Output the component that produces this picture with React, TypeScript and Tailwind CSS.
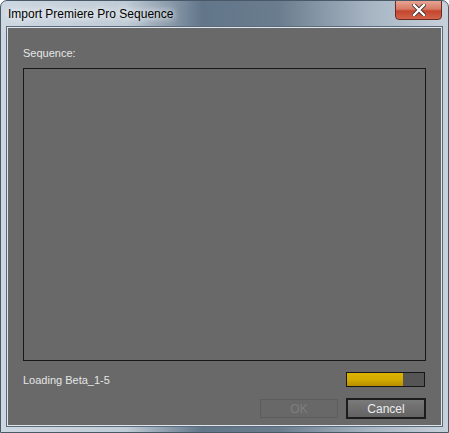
import React from 'react';

export default function App() {
  return (
    <div className="w-[449px] h-[433px] flex flex-col rounded-t-[7px] border border-[#4a5968] bg-[linear-gradient(to_right,#cdd7e1_0%,#bfcbd6_28%,#62768a_45%,#6a7d8e_62%,#a6b4c2_82%,#c7d1db_100%)] font-['Liberation_Sans',sans-serif] overflow-hidden">
      {/* Title bar */}
      <div className="h-[27px] relative flex items-center">
        <span className="pl-[7px] pt-[1px] text-[12px] text-black [text-shadow:0_0_6px_#ffffff,0_0_10px_#ffffff]">
          Import Premiere Pro Sequence
        </span>
        <button className="absolute left-[394px] top-[-1px] w-[47px] h-[20px] rounded-b-[4px] border border-[#6b2a22] bg-[linear-gradient(to_bottom,#e8a493_0%,#d77b65_45%,#c4452e_55%,#d3634b_100%)] flex items-center justify-center">
          <svg width="14" height="12" viewBox="0 0 14 12">
            <path d="M2 1 L12 11 M12 1 L2 11" stroke="#3a2a2a" strokeWidth="4" strokeLinecap="square" />
            <path d="M2 1 L12 11 M12 1 L2 11" stroke="#ffffff" strokeWidth="2.4" strokeLinecap="square" />
          </svg>
        </button>
      </div>

      {/* Content panel */}
      <div className="flex-1 mx-[6px] mb-[6px] border border-[#dfe6ee] outline outline-1 outline-[#5b6b7a] bg-[#696969] flex flex-col px-[15px] pt-[19px] pb-[6px] text-[11px] text-[#e6e6e6]">
        <div className="h-[21px] leading-[13px]">Sequence:</div>
        <div className="h-[293px] border border-[#181818]" />

        <div className="mt-[11px] flex items-center justify-between pr-[1px]">
          <span>Loading Beta_1-5</span>
          <div className="w-[79px] h-[15px] border border-[#161616] bg-[#555555] flex">
            <div className="w-[56px] h-full bg-[linear-gradient(to_bottom,#dcb300_0%,#d4ab00_50%,#b88f00_100%)]" />
          </div>
        </div>

        <div className="mt-[11px] flex justify-end gap-[8px]">
          <button className="w-[78px] h-[19px] border border-[#5d5d5d] bg-[#686868] text-[#7e7e7e] text-[12px] leading-none">
            OK
          </button>
          <button className="w-[80px] h-[21px] -mt-[1px] border-2 border-[#1c1c1c] bg-[linear-gradient(to_bottom,#7a7a7a_0%,#6e6e6e_50%,#636363_100%)] text-[#ececec] text-[12px] leading-none">
            Cancel
          </button>
        </div>
      </div>
    </div>
  );
}
